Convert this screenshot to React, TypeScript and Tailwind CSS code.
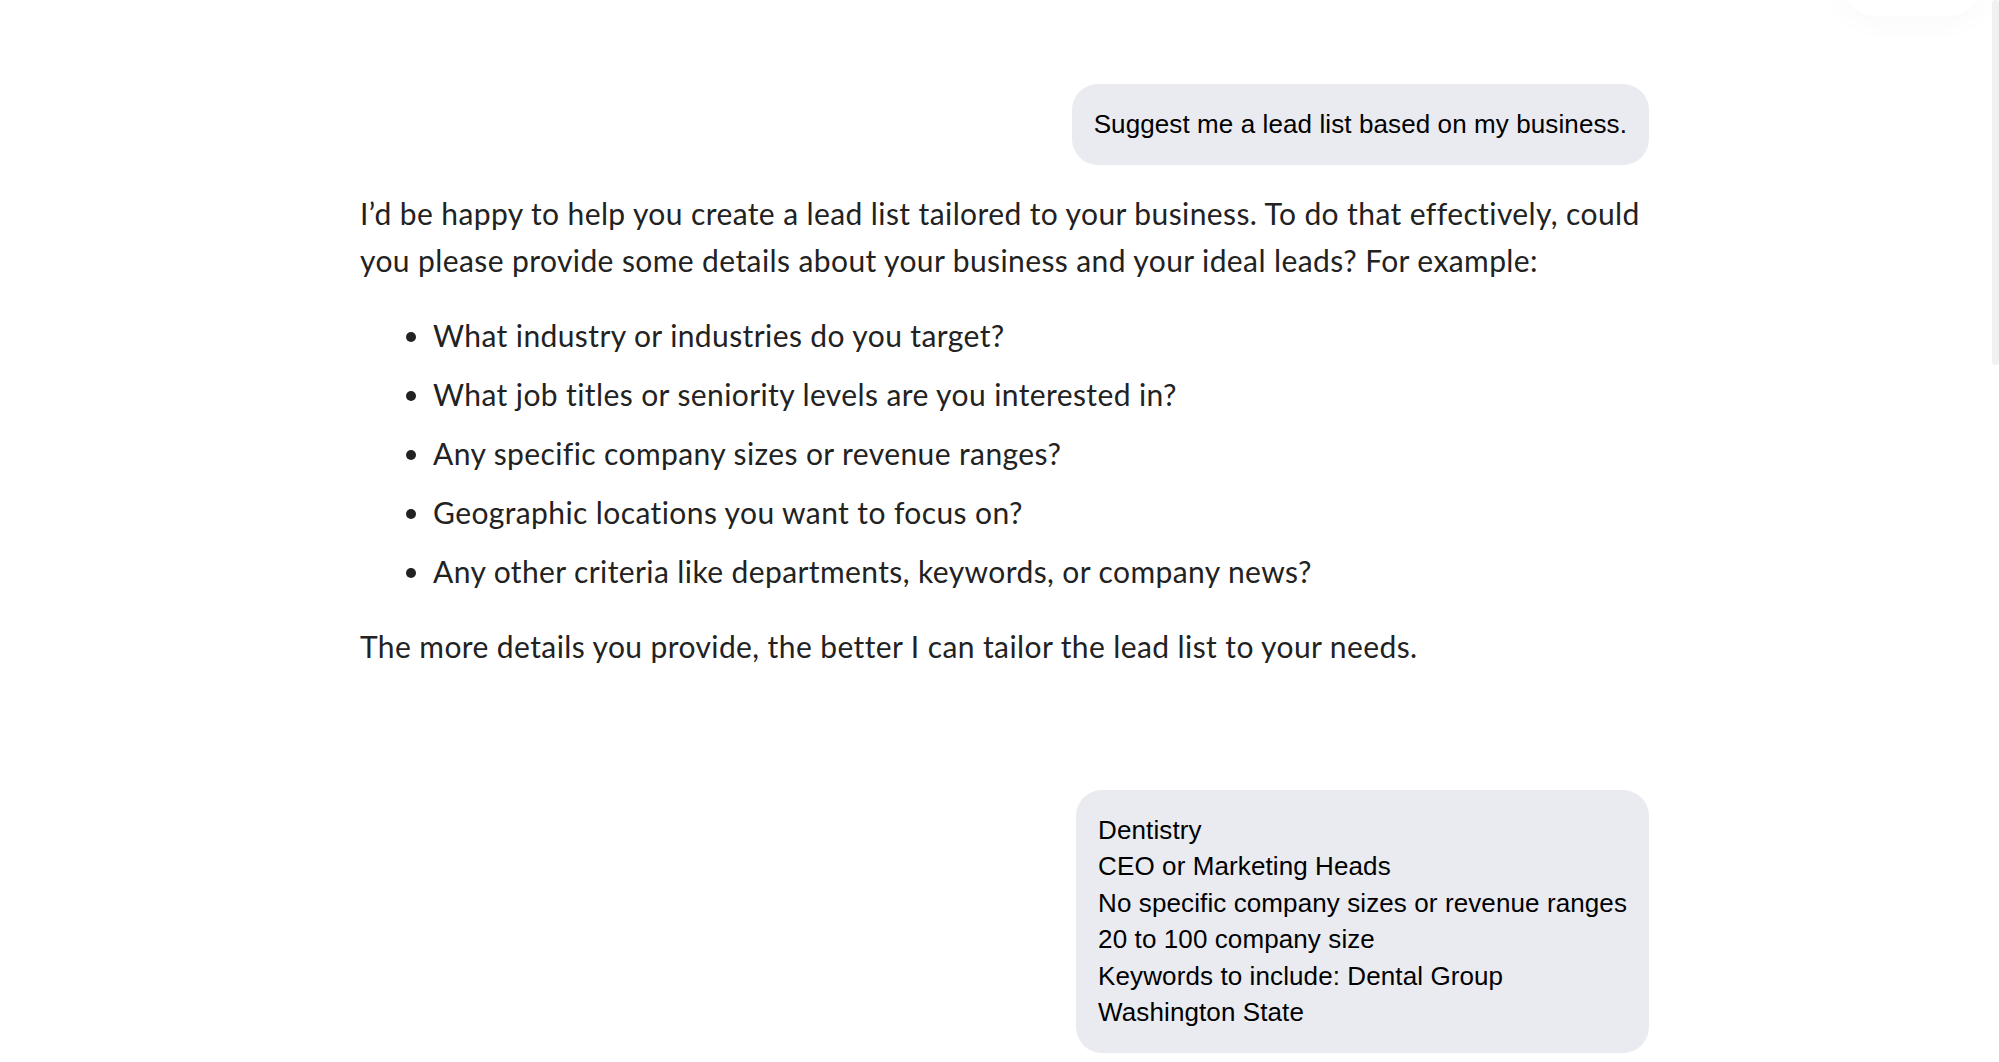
import React from 'react'

const bullets = [
  'What industry or industries do you target?',
  'What job titles or seniority levels are you interested in?',
  'Any specific company sizes or revenue ranges?',
  'Geographic locations you want to focus on?',
  'Any other criteria like departments, keywords, or company news?',
]

const answers = [
  'Dentistry',
  'CEO or Marketing Heads',
  'No specific company sizes or revenue ranges',
  '20 to 100 company size',
  'Keywords to include: Dental Group',
  'Washington State',
]

const UserBubble: React.FC<{ lines: string[] }> = ({ lines }) => (
  <div className="flex justify-end">
    <div className="rounded-[26px] bg-[#e9ebf1] px-[22px] py-[22px] text-[26px] leading-[36.5px] tracking-[0.1px] text-black [font-family:'Liberation_Sans',Arial,sans-serif]">
      {lines.map((l) => (
        <div key={l}>{l}</div>
      ))}
    </div>
  </div>
)

export default function App() {
  return (
    <div className="relative h-[1062px] w-full overflow-hidden bg-white">
      {/* faint shadow from something above the viewport */}
      <div className="absolute -top-[64px] right-[12px] h-[80px] w-[150px] rounded-full bg-white shadow-[0_8px_28px_rgba(0,0,0,0.025)]" />
      {/* scrollbar thumb */}
      <div className="absolute right-0 top-0 h-[365px] w-[7px] rounded-[4px] bg-[#f1f1f1]" />

      <div className="ml-[360px] w-[1289px] pt-[84px]">
        <UserBubble lines={['Suggest me a lead list based on my business.']} />

        <div className="mt-[25px] text-[30px] leading-[47px] tracking-[0.4px] text-[#222] [font-family:Lato,'Open_Sans',sans-serif]">
          <p>
            I’d be happy to help you create a lead list tailored to your business. To do that effectively, could
            <br />
            you please provide some details about your business and your ideal leads? For example:
          </p>
          <ul className="my-[28px] flex flex-col gap-[12px] pl-[73px]">
            {bullets.map((b) => (
              <li key={b} className="list-disc">
                {b}
              </li>
            ))}
          </ul>
          <p>The more details you provide, the better I can tailor the lead list to your needs.</p>
        </div>

        <div className="mt-[120px]">
          <UserBubble lines={answers} />
        </div>
      </div>
    </div>
  )
}
